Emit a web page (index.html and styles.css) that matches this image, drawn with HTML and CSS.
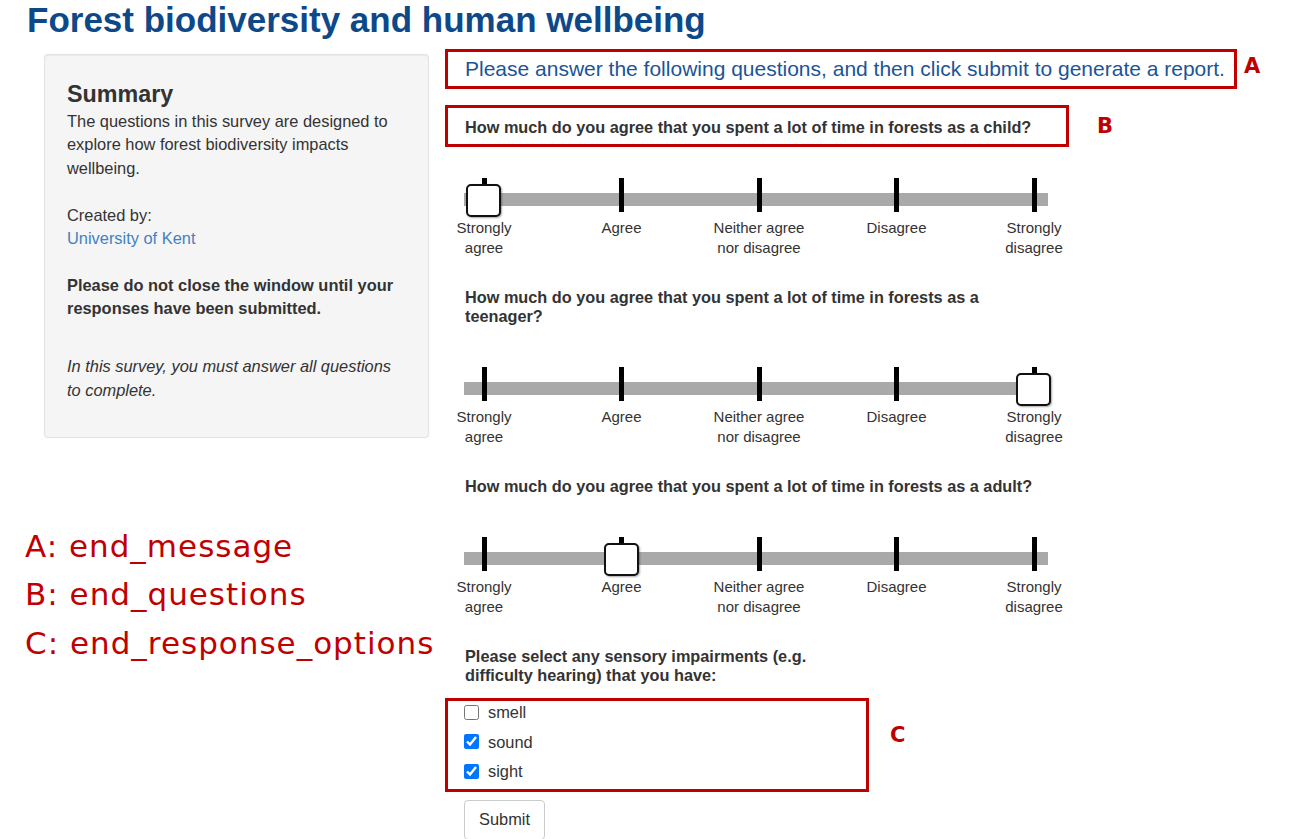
FILE: index.html
```html
<!DOCTYPE html>
<html lang="en">
<head>
<meta charset="utf-8">
<title>Forest biodiversity and human wellbeing</title>
<link rel="stylesheet" href="styles.css">
</head>
<body>
<h1 class="title">Forest biodiversity and human wellbeing</h1>
<div class="layout">
  <aside class="side">
    <div class="well">
      <h3 class="well-title">Summary</h3>
      <p class="p-desc">The questions in this survey are designed to explore how forest biodiversity impacts wellbeing.</p>
      <p class="p-created">Created by:<br><a class="link" href="#">University of Kent</a></p>
      <p class="p-warn">Please do not close the window until your responses have been submitted.</p>
      <p class="p-note">In this survey, you must answer all questions to complete.</p>
    </div>
    <div class="legend">
      <div>A: end_message</div>
      <div>B: end_questions</div>
      <div>C: end_response_options</div>
    </div>
  </aside>

  <main class="form">
    <div class="annot-row">
      <div class="mark mark-a"><p class="end-msg">Please answer the following questions, and then click submit to generate a report.</p></div>
      <span class="tag tag-a">A</span>
    </div>

    <div class="annot-row row-b">
      <div class="mark mark-b"><p class="q">How much do you agree that you spent a lot of time in forests as a child?</p></div>
      <span class="tag tag-b">B</span>
    </div>

    <div class="scale scale-first">
      <div class="opt"><span class="tick"></span><span class="handle"></span><span class="opt-label">Strongly<br>agree</span></div>
      <div class="opt"><span class="tick"></span><span class="opt-label">Agree</span></div>
      <div class="opt"><span class="tick"></span><span class="opt-label">Neither agree<br>nor disagree</span></div>
      <div class="opt"><span class="tick"></span><span class="opt-label">Disagree</span></div>
      <div class="opt"><span class="tick"></span><span class="opt-label">Strongly<br>disagree</span></div>
    </div>

    <p class="q q-free">How much do you agree that you spent a lot of time in forests as a teenager?</p>

    <div class="scale">
      <div class="opt"><span class="tick"></span><span class="opt-label">Strongly<br>agree</span></div>
      <div class="opt"><span class="tick"></span><span class="opt-label">Agree</span></div>
      <div class="opt"><span class="tick"></span><span class="opt-label">Neither agree<br>nor disagree</span></div>
      <div class="opt"><span class="tick"></span><span class="opt-label">Disagree</span></div>
      <div class="opt"><span class="tick"></span><span class="handle"></span><span class="opt-label">Strongly<br>disagree</span></div>
    </div>

    <p class="q q-free">How much do you agree that you spent a lot of time in forests as a adult?</p>

    <div class="scale">
      <div class="opt"><span class="tick"></span><span class="opt-label">Strongly<br>agree</span></div>
      <div class="opt"><span class="tick"></span><span class="handle"></span><span class="opt-label">Agree</span></div>
      <div class="opt"><span class="tick"></span><span class="opt-label">Neither agree<br>nor disagree</span></div>
      <div class="opt"><span class="tick"></span><span class="opt-label">Disagree</span></div>
      <div class="opt"><span class="tick"></span><span class="opt-label">Strongly<br>disagree</span></div>
    </div>

    <p class="q q-free q-check">Please select any sensory impairments (e.g. difficulty hearing) that you have:</p>

    <div class="annot-row row-c">
      <div class="mark mark-c">
        <label class="check"><input type="checkbox"> smell</label>
        <label class="check"><input type="checkbox" checked> sound</label>
        <label class="check"><input type="checkbox" checked> sight</label>
      </div>
      <span class="tag tag-c">C</span>
    </div>

    <button class="btn" type="button">Submit</button>
  </main>
</div>
</body>
</html>
```
FILE: styles.css
```css
body {
  margin: 0;
  font-family: "Liberation Sans", Arial, sans-serif;
  color: #333;
  background: #fff;
}

.title {
  margin: 0;
  padding-left: 27px;
  font-size: 35px;
  line-height: 40px;
  font-weight: bold;
  color: #0d4989;
}

.layout {
  display: flex;
  align-items: flex-start;
  margin-top: 9px;
}

.side {
  flex: none;
  width: 404px;
  padding-left: 25px;
  margin-top: 5px;
}

.well {
  margin-left: 19px;
  width: 385px;
  box-sizing: border-box;
  background: #f5f5f5;
  border: 1px solid #e3e3e3;
  border-radius: 4px;
  box-shadow: inset 0 1px 1px rgba(0, 0, 0, .05), 0 0 1px rgba(0, 0, 0, .08);
  padding: 22px;
  font-size: 16.4px;
  line-height: 23.4px;
}

.well-title {
  margin: 4px 0 3px;
  font-size: 23.3px;
  line-height: 26px;
  font-weight: bold;
  color: #333;
}

.well p { margin: 0; }
.well .p-desc { margin-bottom: 23.4px; }
.well .p-created { margin-bottom: 23.4px; }
.well .p-warn { margin-bottom: 34.7px; font-weight: bold; }
.well .p-note { margin-bottom: 13px; font-style: italic; }

.link {
  color: #3f82c4;
  text-decoration: none;
}

.legend {
  margin-top: 84px;
  font-family: "DejaVu Sans", sans-serif;
  font-size: 31px;
  letter-spacing: 1px;
  line-height: 48.3px;
  color: #c00000;
  white-space: nowrap;
}

.form {
  flex: none;
  width: 830px;
  margin-left: 16px;
}

.annot-row {
  display: flex;
  align-items: flex-start;
}

.mark {
  border: 3px solid #c00000;
  box-sizing: border-box;
}

.mark-a {
  width: 792px;
  padding: 5px 17px;
}

.end-msg {
  margin: 0;
  font-size: 21px;
  line-height: 24px;
  color: #1a5597;
  white-space: nowrap;
}

.row-b { margin-top: 16px; }

.mark-b {
  width: 624px;
  padding: 9.5px 17px 7.5px;
}

.q {
  margin: 0;
  font-size: 16.3px;
  line-height: 19px;
  font-weight: bold;
  color: #333;
}

.q-free {
  width: 583px;
  padding-left: 20px;
  margin-top: 29.5px;
}

.q-check { width: 351px; }

.tag {
  font-family: "DejaVu Sans", sans-serif;
  font-weight: bold;
  font-size: 21px;
  line-height: 20px;
  color: #c00000;
}

.tag-a { margin: 7px 0 0 7px; }
.tag-b { margin: 11.4px 0 0 28px; }
.tag-c { margin: 27.4px 0 0 21px; }

.scale {
  position: relative;
  display: grid;
  grid-template-columns: repeat(5, 137.5px);
  margin-top: 41.5px;
  margin-left: -29.75px;
}

.scale-first { margin-top: 31px; }

.scale::before {
  content: "";
  position: absolute;
  left: 48.75px;
  width: 584px;
  top: 15px;
  height: 13px;
  background: #a9a9a9;
}

.opt {
  position: relative;
  display: flex;
  flex-direction: column;
  align-items: center;
}

.tick {
  position: relative;
  z-index: 1;
  width: 5px;
  height: 34px;
  background: #000;
}

.handle {
  position: absolute;
  z-index: 2;
  top: 6px;
  left: 50%;
  margin-left: -18px;
  width: 35px;
  height: 33px;
  box-sizing: border-box;
  border: 2px solid #111;
  border-radius: 5px;
  background: #fff;
  box-shadow: 1px 1px 2px rgba(0, 0, 0, .35);
}

.opt-label {
  margin-top: 6px;
  font-size: 15px;
  line-height: 20px;
  text-align: center;
  color: #333;
  white-space: nowrap;
}

.row-c { margin-top: 13.5px; }

.mark-c {
  width: 424px;
  padding: 1px 16px 8px;
  display: flex;
  flex-direction: column;
  gap: 9.5px;
}

.check {
  display: flex;
  align-items: center;
  gap: 9px;
  font-size: 16.4px;
  line-height: 20px;
  color: #333;
}

.check input {
  width: 15px;
  height: 15px;
  margin: 0;
}

.btn {
  display: block;
  margin: 8px 0 0 19px;
  padding: 7.3px 14px;
  font-family: "Liberation Sans", Arial, sans-serif;
  font-size: 16.4px;
  line-height: 23.4px;
  color: #333;
  background: #fff;
  border: 1px solid #ccc;
  border-radius: 4px;
}
```
